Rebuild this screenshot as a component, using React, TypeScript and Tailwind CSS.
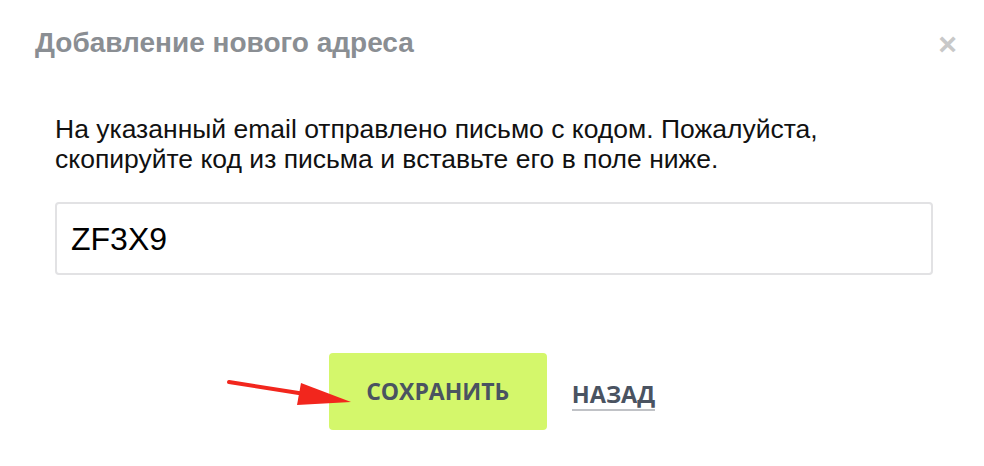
export default function App() {
  return (
    <div className="relative w-[984px] h-[466px] bg-white font-['Liberation_Sans',Arial,sans-serif]">
      <div className="flex items-start justify-between pl-[35px] pr-[27px] pt-[28px]">
        <h2 className="text-[28px] leading-[30px] font-bold text-[#8a8e93]">Добавление нового адреса</h2>
        <button className="mt-[1px] text-[32px] leading-[30px] font-bold text-[#c8c8c8]">×</button>
      </div>

      <div className="px-[51px] pt-[55px]">
        <p className="pl-[4px] text-[26.5px] leading-[30px] text-[#111]">
          На указанный email отправлено письмо с кодом. Пожалуйста,
          <br />
          скопируйте код из письма и вставьте его в поле ниже.
        </p>
        <div className="mt-[28px] ml-[4px] w-[878px] h-[73px] rounded-[4px] border-2 border-[#e2e2e4] flex items-center px-[14px]">
          <span className="text-[32px] text-black">ZF3X9</span>
        </div>
      </div>

      <div className="mt-[78px] flex items-center justify-center gap-[25px] font-['Open_Sans',sans-serif] font-bold text-[#4a5361]">
        <button className="w-[218px] h-[77px] rounded-[4px] bg-[#d4f76b] text-[23px]">СОХРАНИТЬ</button>
        <span className="text-[23.5px] leading-[30px] border-b-2 border-[#c0c2c6] mt-[6px]">НАЗАД</span>
      </div>

      <svg className="absolute left-0 top-0" width="984" height="466" viewBox="0 0 984 466">
        <line x1="229" y1="382" x2="305" y2="394" stroke="#f2261d" strokeWidth="4" strokeLinecap="round" />
        <polygon points="301,383 351,402 297,405" fill="#f2261d" />
      </svg>
    </div>
  )
}
